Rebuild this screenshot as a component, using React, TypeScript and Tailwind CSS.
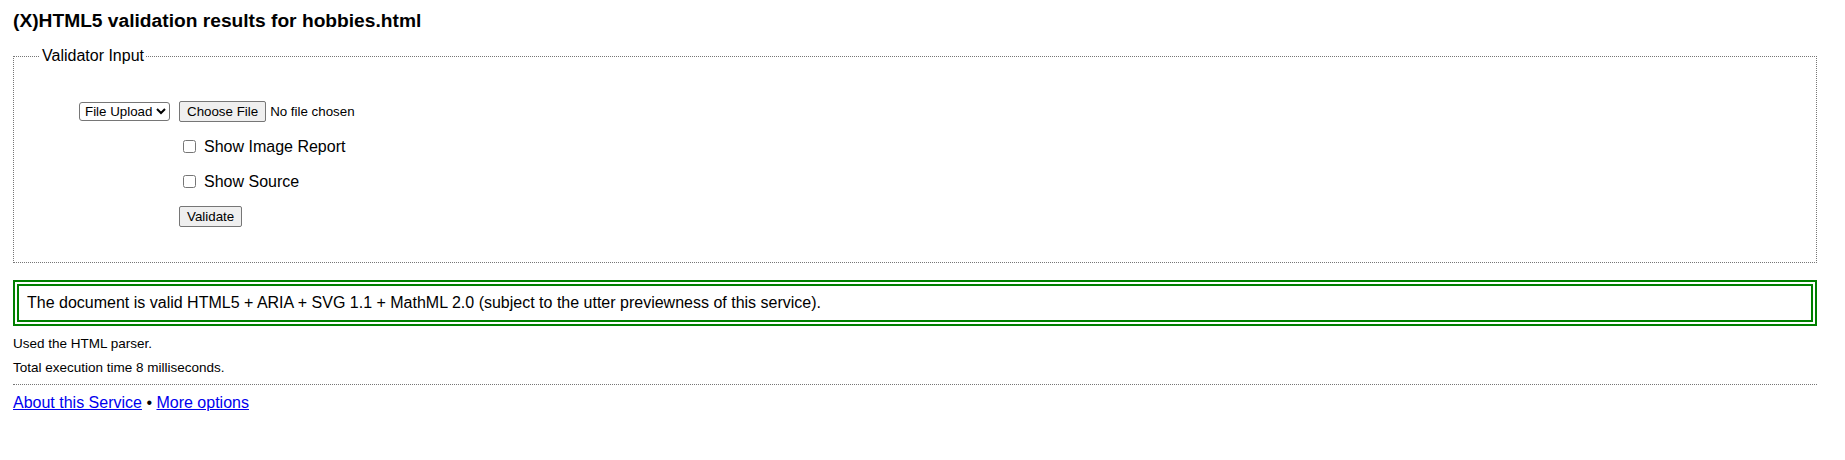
import React from "react";

export default function App() {
  return (
    <div className="min-h-screen bg-white pl-[13px] pr-[28px] text-black font-['Liberation_Sans',Arial,sans-serif]">
      <h2 className="pt-[10px] text-[19.2px] font-bold leading-[22px]">
        (X)HTML5 validation results for hobbies.html
      </h2>

      <form onSubmit={(e) => e.preventDefault()}>
        <fieldset className="mt-[15px] border border-dotted border-[#767676] pb-[28px]">
          <legend className="ml-[26px] px-[2px] text-[16px] leading-[18px]">Validator Input</legend>

          <div className="mt-[29px] grid grid-cols-[165px_1fr] text-[13.33px]">
            <div className="flex h-[35px] items-center pl-[65px]">
              <select className="h-[19px] w-[91px] rounded-[3px] border border-[#767676] bg-white pl-[1px] text-[13.33px] leading-[15px]">
                <option>File Upload</option>
                <option>Address</option>
                <option>Text Input</option>
              </select>
            </div>
            <div className="flex h-[35px] items-center">
              <button
                type="button"
                className="h-[21px] rounded-[2px] border border-[#767676] bg-[#efefef] px-[7px] leading-[15px]"
              >
                Choose File
              </button>
              <span className="ml-[4px]">No file chosen</span>
            </div>

            <div />
            <label className="flex h-[35px] items-center text-[16px]">
              <input type="checkbox" className="ml-[4px] h-[13px] w-[13px]" />
              <span className="ml-[8px]">Show Image Report</span>
            </label>

            <div />
            <label className="flex h-[35px] items-center text-[16px]">
              <input type="checkbox" className="ml-[4px] h-[13px] w-[13px]" />
              <span className="ml-[8px]">Show Source</span>
            </label>

            <div />
            <div className="flex h-[35px] items-center">
              <button
                type="submit"
                className="h-[21px] rounded-[2px] border border-[#767676] bg-[#efefef] px-[7px] leading-[15px]"
              >
                Validate
              </button>
            </div>
          </div>
        </fieldset>
      </form>

      <div className="mt-[17px] border-[6px] border-double border-[#008000] px-[8px] py-[8px] text-[16px] leading-[18px]">
        The document is valid HTML5 + ARIA + SVG 1.1 + MathML 2.0 (subject to the utter previewness of this service).
      </div>

      <div className="mt-[6px] text-[13.5px] leading-[24px]">
        <p>Used the HTML parser.</p>
        <p>Total execution time 8 milliseconds.</p>
      </div>

      <hr className="mt-[4px] border-t border-dotted border-[#767676]" />

      <p className="mt-[9px] text-[16px] leading-[18px]">
        <a href="#" className="text-[#0000ee] underline">
          About this Service
        </a>{" "}
        •{" "}
        <a href="#" className="text-[#0000ee] underline">
          More options
        </a>
      </p>
    </div>
  );
}
